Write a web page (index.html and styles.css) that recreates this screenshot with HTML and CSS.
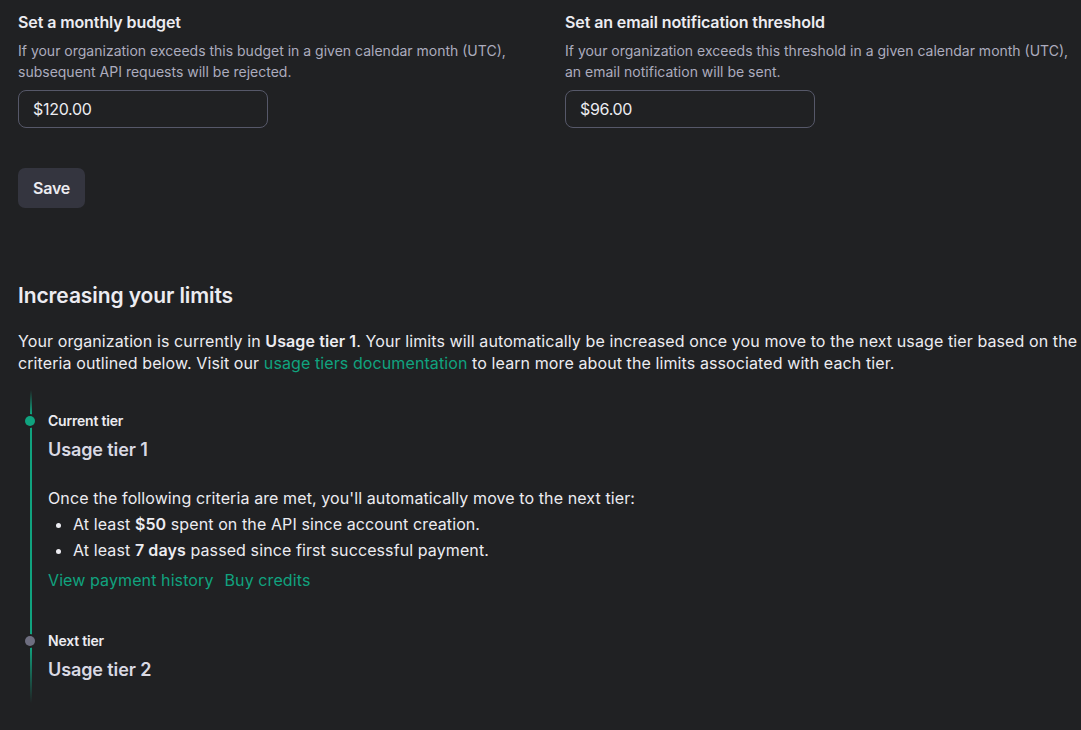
FILE: index.html
```html
<!DOCTYPE html>
<html>
<head>
<meta charset="utf-8">
<link rel="stylesheet" href="styles.css">
</head>
<body>
<div class="page">
  <div class="limits-row">
    <div class="field">
      <div class="field-title">Set a monthly budget</div>
      <div class="field-desc">If your organization exceeds this budget in a given calendar month (UTC), subsequent API requests will be rejected.</div>
      <div class="input">$120.00</div>
    </div>
    <div class="field">
      <div class="field-title">Set an email notification threshold</div>
      <div class="field-desc">If your organization exceeds this threshold in a given calendar month (UTC), an email notification will be sent.</div>
      <div class="input">$96.00</div>
    </div>
  </div>
  <button class="save">Save</button>

  <h2 class="section-title">Increasing your limits</h2>
  <p class="intro">Your organization is currently in <b>Usage tier 1</b>. Your limits will automatically be increased once you move to the next usage tier based on the criteria outlined below. Visit our <a class="link">usage tiers documentation</a> to learn more about the limits associated with each tier.</p>

  <div class="timeline">
    <div class="tier current">
      <span class="dot"></span>
      <div class="tier-label">Current tier</div>
      <div class="tier-name">Usage tier 1</div>
      <div class="tier-body">
        <div>Once the following criteria are met, you'll automatically move to the next tier:</div>
        <ul class="criteria">
          <li>At least <b>$50</b> spent on the API since account creation.</li>
          <li>At least <b>7 days</b> passed since first successful payment.</li>
        </ul>
        <div class="links"><a class="link">View payment history</a><a class="link">Buy credits</a></div>
      </div>
    </div>
    <div class="tier next">
      <span class="dot"></span>
      <div class="tier-label">Next tier</div>
      <div class="tier-name">Usage tier 2</div>
    </div>
  </div>
</div>
</body>
</html>
```

FILE: styles.css
```css
html, body {
  margin: 0;
  padding: 0;
  background: #202123;
  color: #ececf1;
  font-family: Inter, "Liberation Sans", sans-serif;
}
.page {
  padding: 10px 0 0 18px;
  width: 1063px;
}
.limits-row {
  display: grid;
  grid-template-columns: 547px 1fr;
}
.field-title {
  font-size: 16px;
  font-weight: 600;
  line-height: 24px;
  letter-spacing: -0.1px;
}
.field-desc {
  margin-top: 6px;
  font-size: 14px;
  line-height: 21px;
  color: #acacbe;
  letter-spacing: 0;
}
.input {
  margin-top: 8px;
  width: 234px;
  height: 36px;
  border: 1px solid #565869;
  border-radius: 8px;
  padding-left: 14px;
  font-size: 16px;
  line-height: 37px;
  letter-spacing: -0.3px;
}
.save {
  display: block;
  margin-top: 40px;
  height: 40px;
  padding: 0 15px;
  border: none;
  border-radius: 7px;
  background: #34353f;
  color: #ececf1;
  font-family: inherit;
  font-size: 16px;
  font-weight: 600;
  letter-spacing: -0.2px;
}
.section-title {
  margin: 74px 0 0;
  font-size: 21px;
  font-weight: 600;
  line-height: 28px;
  letter-spacing: -0.1px;
}
.intro {
  margin: 20px 0 0;
  font-size: 16px;
  line-height: 22px;
  letter-spacing: 0.1px;
}
b { font-weight: 600; }
.link { color: #10a37f; text-decoration: none; }
.timeline {
  margin-top: 16px;
  padding: 23px 0 21px 30px;
  background: linear-gradient(to bottom, rgba(16,163,127,0) 0px, #10a37f 24px, #10a37f calc(100% - 56px), rgba(16,163,127,0) 100%) no-repeat 12px 0 / 2px 100%;
}
.tier { position: relative; }
.tier.next { margin-top: 40px; }
.dot {
  position: absolute;
  left: -23px;
  top: 3px;
  width: 10px;
  height: 10px;
  border-radius: 50%;
  background: #10a37f;
  box-shadow: 0 0 0 2px #202123;
}
.next .dot { background: #6e6e80; }
.tier-label {
  font-size: 14px;
  font-weight: 600;
  line-height: 16px;
  letter-spacing: -0.2px;
}
.tier-name {
  margin-top: 9px;
  font-size: 18px;
  font-weight: 600;
  line-height: 24px;
  color: #d9d9e3;
  letter-spacing: -0.1px;
}
.tier-body {
  margin-top: 23px;
  font-size: 16px;
  line-height: 26px;
  letter-spacing: 0.1px;
}
.criteria {
  margin: 0;
  padding-left: 25px;
}
.links { margin-top: 4px; }
.links .link { margin-right: 11px; }
```
